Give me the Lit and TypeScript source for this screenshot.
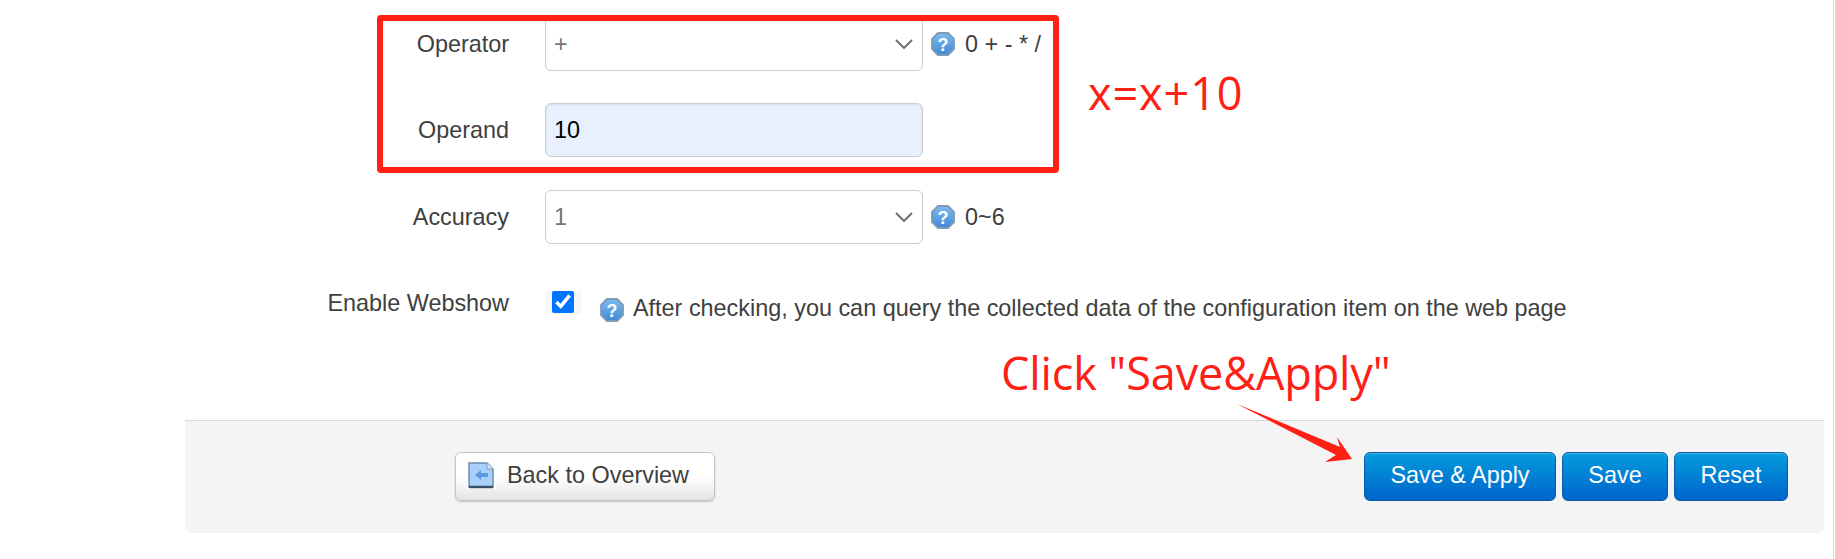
import { LitElement, html, css, svg } from "lit";
import { customElement } from "lit/decorators.js";

const helpIcon = () => html`<svg class="help" viewBox="0 0 24 24" width="24" height="24">
  <defs>
    <linearGradient id="hg" x1="0" y1="0" x2="0" y2="1">
      <stop offset="0" stop-color="#7dbcf0"></stop>
      <stop offset="1" stop-color="#3f8ad6"></stop>
    </linearGradient>
  </defs>
  <polygon points="7,1 17,1 23,7 23,17 17,23 7,23 1,17 1,7" fill="url(#hg)" stroke="#7f9bb5" stroke-width="1.8" stroke-linejoin="round"></polygon>
  <text x="12" y="18.5" text-anchor="middle" font-family="Liberation Sans, sans-serif" font-weight="700" font-size="18" fill="#fff">?</text>
</svg>`;

const chevron = () => html`<svg class="chev" viewBox="0 0 20 12" width="20" height="12">
  <path d="M2 2 L10 10 L18 2" fill="none" stroke="#6a6a6a" stroke-width="1.8"></path>
</svg>`;

const backIcon = svg`
  <rect x="0" y="0" width="29" height="27" fill="#fff"></rect>
  <path d="M2 1 H20 L26 7 V25 H2 Z" fill="#a9d0fb" stroke="#6f8cab" stroke-width="1.5"></path>
  <path d="M2 25 H26" stroke="#3c4f68" stroke-width="2.5"></path>
  <path d="M20 1 V7 H26" fill="#d6e6f7" stroke="#7f99b3" stroke-width="1"></path>
  <path d="M8 13 L14 8 V11 H21 V15 H14 V18 Z" fill="#5b9be3"></path>
`;

@customElement("app-root")
export class AppRoot extends LitElement {
  static styles = css`
    :host {
      display: block;
      position: relative;
      width: 1835px;
      height: 559px;
      overflow: hidden;
      background: #fff;
      font-family: "Liberation Sans", Arial, sans-serif;
      font-size: 23.4px;
      color: #404040;
    }
    .form {
      display: flex;
      flex-direction: column;
      padding-top: 17px;
    }
    .row {
      display: grid;
      grid-template-columns: 509px 378px auto;
      column-gap: 36px;
      align-items: center;
      height: 54px;
      margin-bottom: 32px;
    }
    .row.acc {
      margin-top: 1px;
      margin-bottom: 47px;
    }
    .row .hint {
      margin-left: -28px;
    }
    .label {
      text-align: right;
    }
    .select {
      position: relative;
      display: block;
      height: 54px;
    }
    select,
    .text {
      display: block;
      box-sizing: border-box;
      width: 100%;
      height: 54px;
      margin: 0;
      padding: 0 8px;
      border: 1px solid #ccc;
      border-radius: 6px;
      font: inherit;
      outline: none;
    }
    select {
      appearance: none;
      background: #fff;
      color: #777;
    }
    .text {
      background: #e8f0fe;
      color: #000;
      box-shadow: inset 0 1px 2px rgba(0, 0, 0, 0.08);
    }
    .chev {
      position: absolute;
      right: 9px;
      top: 21px;
      pointer-events: none;
    }
    .hint {
      display: flex;
      align-items: center;
      gap: 10px;
      white-space: nowrap;
    }
    .help {
      flex: none;
    }
    .check-row {
      display: flex;
      align-items: flex-start;
      height: 28px;
    }
    .check-label {
      flex: none;
      width: 509px;
      box-sizing: border-box;
      text-align: right;
      line-height: 24px;
    }
    .check-box {
      flex: none;
      width: 36px;
      height: 23px;
      margin-left: 36px;
      background: #f7f7f7;
      display: flex;
      justify-content: center;
    }
    .check-box input {
      width: 22px;
      height: 22px;
      margin: 0;
      accent-color: #0075ff;
    }
    .check-row .hint {
      margin: 4px 0 0 19px;
      gap: 9px;
    }
    .check-row .hint span {
      margin-bottom: 2px;
    }
    .footer {
      display: flex;
      align-items: flex-start;
      box-sizing: border-box;
      height: 113px;
      margin: 101px 11px 0 185px;
      padding: 31px 36px 0 270px;
      background: #f4f4f4;
      border-top: 1px solid #d8d8d8;
      border-radius: 0 0 7px 7px;
    }
    .btn {
      box-sizing: border-box;
      height: 49px;
      margin: 0;
      padding: 0 0 2px;
      border-radius: 6px;
      font: inherit;
      white-space: nowrap;
    }
    .back {
      display: flex;
      align-items: center;
      gap: 11px;
      width: 260px;
      padding-left: 11px;
      color: #404040;
      border: 1px solid #c4c4c4;
      background: linear-gradient(#fff, #fff 50%, #e4e4e4);
      box-shadow: 0 1px 2px rgba(0, 0, 0, 0.2);
    }
    .actions {
      display: flex;
      gap: 6px;
      margin-left: auto;
    }
    .primary {
      color: #fff;
      border: 1px solid #0a5aa8;
      background: linear-gradient(#049cdb, #0064cd);
      box-shadow: inset 0 1px 0 rgba(255, 255, 255, 0.25);
    }
    .w1 {
      width: 192px;
    }
    .w2 {
      width: 106px;
    }
    .w3 {
      width: 114px;
    }
    .box {
      position: absolute;
      left: 377px;
      top: 15px;
      width: 682px;
      height: 158px;
      box-sizing: border-box;
      border: 6px solid #ff2015;
      border-radius: 4px;
    }
    .note {
      position: absolute;
      color: #ff2015;
      font-family: "Open Sans", "Noto Sans", sans-serif;
      font-size: 45px;
      white-space: nowrap;
      line-height: 1;
    }
    .n1 {
      left: 1088px;
      top: 70px;
      letter-spacing: 0.9px;
    }
    .n2 {
      left: 1001px;
      top: 350px;
      letter-spacing: -0.1px;
    }
    .arrow {
      position: absolute;
      left: 0;
      top: 0;
      pointer-events: none;
    }
    .edge {
      position: absolute;
      left: 1833px;
      top: 0;
      width: 1px;
      height: 559px;
      background: #e0e0e0;
    }
  `;

  render() {
    return html`
      <div class="form">
        <div class="row">
          <div class="label">Operator</div>
          <div class="select">
            <select><option>+</option></select>
            ${chevron()}
          </div>
          <div class="hint">${helpIcon()}<span>0 + - * /</span></div>
        </div>
        <div class="row">
          <div class="label">Operand</div>
          <input class="text" value="10" />
          <div></div>
        </div>
        <div class="row acc">
          <div class="label">Accuracy</div>
          <div class="select">
            <select><option>1</option></select>
            ${chevron()}
          </div>
          <div class="hint">${helpIcon()}<span>0~6</span></div>
        </div>
        <div class="check-row">
          <div class="check-label">Enable Webshow</div>
          <div class="check-box"><input type="checkbox" checked /></div>
          <div class="hint">
            ${helpIcon()}
            <span>After checking, you can query the collected data of the configuration item on the web page</span>
          </div>
        </div>
      </div>

      <div class="footer">
        <button class="btn back">
          <svg viewBox="0 0 29 27" width="29" height="27">${backIcon}</svg>
          <span>Back to Overview</span>
        </button>
        <div class="actions">
          <button class="btn primary w1">Save &amp; Apply</button>
          <button class="btn primary w2">Save</button>
          <button class="btn primary w3">Reset</button>
        </div>
      </div>

      <div class="box"></div>
      <div class="note n1">x=x+10</div>
      <div class="note n2">Click "Save&amp;Apply"</div>
      <svg class="arrow" width="1835" height="559">
        <polygon points="1237,404 1340,447 1337,437 1352,459 1325,462 1336,455" fill="#ff2015"></polygon>
      </svg>
      <div class="edge"></div>
    `;
  }
}
